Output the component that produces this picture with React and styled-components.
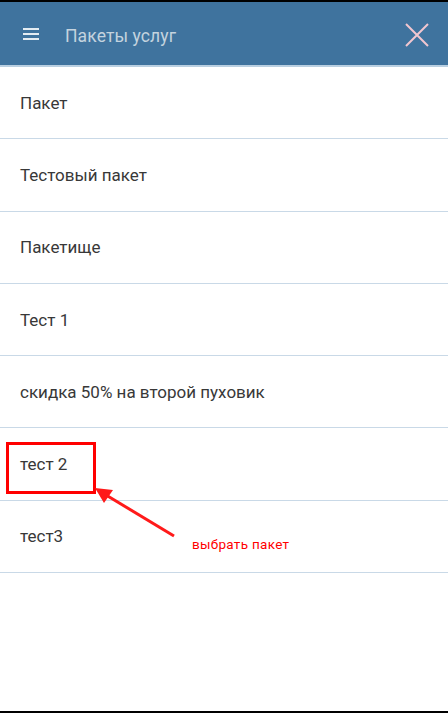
import styled, { createGlobalStyle } from "styled-components";

const GlobalStyle = createGlobalStyle`
  html, body {
    margin: 0;
    padding: 0;
    background: #ffffff;
  }
  body {
    font-family: Roboto, "Noto Sans", "Liberation Sans", sans-serif;
  }
`;

const packages = [
  "Пакет",
  "Тестовый пакет",
  "Пакетище",
  "Тест 1",
  "скидка 50% на второй пуховик",
  "тест 2",
  "тест3",
];

export default function App() {
  return (
    <Screen>
      <GlobalStyle />
      <TopBar>
        <MenuButton aria-label="menu">
          <svg width="16" height="13" viewBox="0 0 16 13">
            <rect x="0" y="0" width="16" height="2" fill="#e4ecf2" />
            <rect x="0" y="5" width="16" height="2" fill="#e4ecf2" />
            <rect x="0" y="10" width="16" height="2" fill="#e4ecf2" />
          </svg>
        </MenuButton>
        <Title>Пакеты услуг</Title>
        <CloseButton aria-label="close">
          <svg width="24" height="24" viewBox="0 0 24 24">
            <path
              d="M1 1 L23 23 M23 1 L1 23"
              stroke="#f1c6d0"
              strokeWidth="2"
              fill="none"
            />
          </svg>
        </CloseButton>
      </TopBar>
      <List>
        {packages.map((name) => (
          <Row key={name}>{name}</Row>
        ))}
      </List>
      <Annotation>
        <Highlight />
        <Arrow width="448" height="713" viewBox="0 0 448 713">
          <line
            x1="174"
            y1="536"
            x2="106"
            y2="495"
            stroke="#ff1a1a"
            strokeWidth="3"
          />
          <polygon points="95,488 113,490 104,503" fill="#ff1a1a" />
        </Arrow>
        <Note>выбрать пакет</Note>
      </Annotation>
    </Screen>
  );
}

const Screen = styled.div`
  position: relative;
  width: 448px;
  height: 713px;
  box-sizing: border-box;
  border-top: 2px solid #000;
  border-bottom: 2px solid #000;
  background: #fff;
  overflow: hidden;
`;

const TopBar = styled.header`
  display: flex;
  align-items: center;
  box-sizing: border-box;
  height: 65px;
  padding: 2px 19px 0 23px;
  background: #3f739e;
  border-bottom: 2px solid #b9cfe1;
`;

const MenuButton = styled.div`
  display: flex;
  align-items: center;
  width: 16px;
  margin-right: 26px;
`;

const Title = styled.div`
  flex: 1;
  padding-top: 2px;
  font-size: 17.5px;
  color: #c4d3df;
  letter-spacing: 0.1px;
`;

const CloseButton = styled.div`
  display: flex;
  align-items: center;
`;

const List = styled.ul`
  list-style: none;
  margin: 0;
  padding: 0;
`;

const Row = styled.li`
  display: flex;
  align-items: center;
  height: 71.3px;
  padding: 0 20px;
  border-bottom: 1px solid #c9d9e7;
  font-size: 17px;
  color: #383838;
`;

const Annotation = styled.div`
  position: absolute;
  inset: 0;
  pointer-events: none;
`;

const Highlight = styled.div`
  position: absolute;
  left: 6px;
  top: 440px;
  width: 84px;
  height: 46px;
  border: 3px solid #ff0000;
`;

const Arrow = styled.svg`
  position: absolute;
  left: 0;
  top: -2px;
`;

const Note = styled.div`
  position: absolute;
  left: 192px;
  top: 534px;
  font-size: 13.5px;
  color: #ff0000;
  letter-spacing: 0.3px;
`;
